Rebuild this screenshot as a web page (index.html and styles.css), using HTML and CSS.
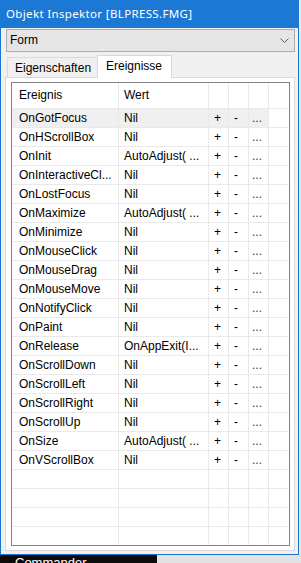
FILE: index.html
```
<!DOCTYPE html>
<html>
<head>
<meta charset="utf-8">
<link rel="stylesheet" href="styles.css">
</head>
<body>
<div class="window">
  <div class="titlebar">Objekt Inspektor [BLPRESS.FMG]</div>
  <div class="combo">
    <span>Form</span>
    <svg class="chev" width="9" height="6" viewBox="0 0 9 6"><polyline points="0.5,0.5 4.5,4.5 8.5,0.5" fill="none" stroke="#606060" stroke-width="1"/></svg>
  </div>
  <div class="tabs">
    <div class="tab">Eigenschaften</div>
    <div class="tab active">Ereignisse</div>
  </div>
  <div class="panel">
    <div class="grid">
      <div class="row head"><div class="c1">Ereignis</div><div class="c2">Wert</div><div class="c3"></div><div class="c4"></div><div class="c5"></div><div class="c6"></div></div>
      <div class="row sel"><div class="c1">OnGotFocus</div><div class="c2">Nil</div><div class="c3">+</div><div class="c4">-</div><div class="c5">...</div><div class="c6"></div></div>
      <div class="row"><div class="c1">OnHScrollBox</div><div class="c2">Nil</div><div class="c3">+</div><div class="c4">-</div><div class="c5">...</div><div class="c6"></div></div>
      <div class="row"><div class="c1">OnInit</div><div class="c2">AutoAdjust( ...</div><div class="c3">+</div><div class="c4">-</div><div class="c5">...</div><div class="c6"></div></div>
      <div class="row"><div class="c1">OnInteractiveCl...</div><div class="c2">Nil</div><div class="c3">+</div><div class="c4">-</div><div class="c5">...</div><div class="c6"></div></div>
      <div class="row"><div class="c1">OnLostFocus</div><div class="c2">Nil</div><div class="c3">+</div><div class="c4">-</div><div class="c5">...</div><div class="c6"></div></div>
      <div class="row"><div class="c1">OnMaximize</div><div class="c2">AutoAdjust( ...</div><div class="c3">+</div><div class="c4">-</div><div class="c5">...</div><div class="c6"></div></div>
      <div class="row"><div class="c1">OnMinimize</div><div class="c2">Nil</div><div class="c3">+</div><div class="c4">-</div><div class="c5">...</div><div class="c6"></div></div>
      <div class="row"><div class="c1">OnMouseClick</div><div class="c2">Nil</div><div class="c3">+</div><div class="c4">-</div><div class="c5">...</div><div class="c6"></div></div>
      <div class="row"><div class="c1">OnMouseDrag</div><div class="c2">Nil</div><div class="c3">+</div><div class="c4">-</div><div class="c5">...</div><div class="c6"></div></div>
      <div class="row"><div class="c1">OnMouseMove</div><div class="c2">Nil</div><div class="c3">+</div><div class="c4">-</div><div class="c5">...</div><div class="c6"></div></div>
      <div class="row"><div class="c1">OnNotifyClick</div><div class="c2">Nil</div><div class="c3">+</div><div class="c4">-</div><div class="c5">...</div><div class="c6"></div></div>
      <div class="row"><div class="c1">OnPaint</div><div class="c2">Nil</div><div class="c3">+</div><div class="c4">-</div><div class="c5">...</div><div class="c6"></div></div>
      <div class="row"><div class="c1">OnRelease</div><div class="c2">OnAppExit(I...</div><div class="c3">+</div><div class="c4">-</div><div class="c5">...</div><div class="c6"></div></div>
      <div class="row"><div class="c1">OnScrollDown</div><div class="c2">Nil</div><div class="c3">+</div><div class="c4">-</div><div class="c5">...</div><div class="c6"></div></div>
      <div class="row"><div class="c1">OnScrollLeft</div><div class="c2">Nil</div><div class="c3">+</div><div class="c4">-</div><div class="c5">...</div><div class="c6"></div></div>
      <div class="row"><div class="c1">OnScrollRight</div><div class="c2">Nil</div><div class="c3">+</div><div class="c4">-</div><div class="c5">...</div><div class="c6"></div></div>
      <div class="row"><div class="c1">OnScrollUp</div><div class="c2">Nil</div><div class="c3">+</div><div class="c4">-</div><div class="c5">...</div><div class="c6"></div></div>
      <div class="row"><div class="c1">OnSize</div><div class="c2">AutoAdjust( ...</div><div class="c3">+</div><div class="c4">-</div><div class="c5">...</div><div class="c6"></div></div>
      <div class="row"><div class="c1">OnVScrollBox</div><div class="c2">Nil</div><div class="c3">+</div><div class="c4">-</div><div class="c5">...</div><div class="c6"></div></div>
      <div class="row"><div class="c1"></div><div class="c2"></div><div class="c3"></div><div class="c4"></div><div class="c5"></div><div class="c6"></div></div>
      <div class="row"><div class="c1"></div><div class="c2"></div><div class="c3"></div><div class="c4"></div><div class="c5"></div><div class="c6"></div></div>
      <div class="row"><div class="c1"></div><div class="c2"></div><div class="c3"></div><div class="c4"></div><div class="c5"></div><div class="c6"></div></div>
      <div class="row"><div class="c1"></div><div class="c2"></div><div class="c3"></div><div class="c4"></div><div class="c5"></div><div class="c6"></div></div>
    </div>
  </div>
</div>
<div class="below">
  <div class="taskbar"><span>Commander</span></div>
</div>
</body>
</html>
```
FILE: styles.css
```
html, body {
  margin: 0;
  padding: 0;
}
body {
  background: #e4e9ee;
  width: 301px;
  height: 563px;
  overflow: hidden;
  font-family: "Liberation Sans", Arial, sans-serif;
  font-size: 12px;
  color: #000;
}
.window {
  box-sizing: border-box;
  width: 299px;
  height: 555px;
  border: 1px solid #1b74cc;
  border-top: none;
  background: #f0f0f0;
  display: flex;
  flex-direction: column;
}
.titlebar {
  height: 28px;
  flex: none;
  background: #1b78d4;
  color: #fff;
  font-family: "Noto Sans", "Liberation Sans", sans-serif;
  font-size: 11.5px;
  letter-spacing: 0.35px;
  line-height: 27px;
  margin: 0 -1px;
  padding-left: 6px;
}
.combo {
  box-sizing: border-box;
  height: 23px;
  margin: 1px 3px 0 5px;
  border: 1px solid #adadad;
  background: #e5e5e5;
  display: flex;
  align-items: center;
  justify-content: space-between;
  padding: 0 5px 0 3px;
  line-height: 21px;
}
.chev {
  display: block;
}
.tabs {
  height: 25px;
  flex: none;
  display: flex;
  align-items: flex-end;
  margin: 0 3px 0 4px;
  padding-left: 2px;
}
.tab {
  box-sizing: border-box;
  height: 20px;
  padding: 0 5px 0 7px;
  border: 1px solid #d9d9d9;
  border-bottom: none;
  background: #f0f0f0;
  line-height: 20px;
  width: 91px;
}
.tab.active {
  height: 23px;
  width: 75px;
  margin-left: -1px;
  margin-bottom: -1px;
  background: #fff;
  padding-left: 8px;
  line-height: 20px;
  position: relative;
  z-index: 1;
}
.panel {
  flex: 1;
  margin: 0 3px 3px 4px;
  border: 1px solid #d9d9d9;
  background: #fff;
  padding: 4px 4px 4px 5px;
  box-sizing: border-box;
}
.grid {
  box-sizing: border-box;
  height: 464px;
  border: 1px solid #828282;
  overflow: hidden;
  background: #fff;
}
.row {
  display: grid;
  grid-template-columns: 107px 90px 20px 20px 20px 20px;
  height: 19px;
}
.row.head {
  height: 26px;
}
.row > div {
  box-sizing: border-box;
  border-right: 1px solid #e9e9e9;
  border-bottom: 1px solid #e9e9e9;
  line-height: 18px;
  white-space: nowrap;
  overflow: hidden;
}
.row.head > div {
  line-height: 25px;
}
.row > .c6 {
  border-right: none;
}
.c1 {
  padding-left: 7px;
}
.c2 {
  padding-left: 5px;
}
.c3 {
  padding-left: 5px;
}
.c4 {
  padding-left: 5px;
}
.c5 {
  padding-left: 3px;
  color: #333;
}
.row.sel > div {
  background: #efefef;
}
.row.sel > .c6 {
  background: #fff;
}
.below {
  height: 8px;
  display: flex;
  overflow: hidden;
  background: #e2e2e2;
}
.taskbar {
  width: 157px;
  background: #0c0c0c;
  color: #fff;
  font-size: 13px;
  line-height: 20px;
  padding-left: 15px;
  box-sizing: border-box;
  margin-top: -2px;
}
```
